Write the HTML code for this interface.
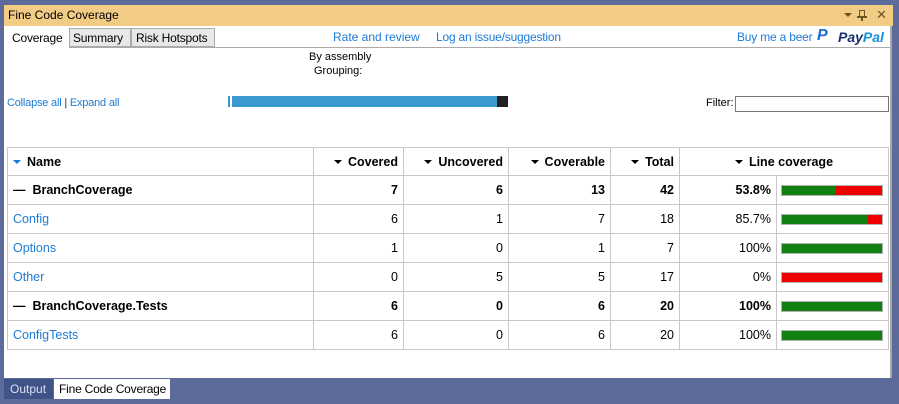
<!DOCTYPE html><html><head><style>
*{margin:0;padding:0;box-sizing:border-box}
body{width:899px;height:404px;background:#5d6b9a;font-family:"Liberation Sans",sans-serif;font-size:12px;position:relative;overflow:hidden;color:#000}
.a{position:absolute;white-space:nowrap}
.lk{color:#1e7ad6}
table{position:absolute;left:7px;top:147px;border-collapse:collapse;width:882px}
td{border:1px solid #c8c8c8;height:29px;font-size:12.5px;padding:0 5px;text-align:right}
td:first-child{text-align:left}
.h td{font-weight:bold;height:28px}
.b td{font-weight:bold}
.n{color:#1e7ad6}
.bar{display:block;width:102px;height:11px;border:1px solid #b0b0b0;background:#e00;margin-left:-1px}
.bar i{display:block;height:100%;background:#118011}
.tri{display:inline-block;width:0;height:0;border-left:4px solid transparent;border-right:4px solid transparent;border-top:4px solid #000;vertical-align:middle;margin-right:6px}
</style></head><body>
<div class="a" style="left:4px;top:5px;width:889px;height:21px;background:#f2cb85"></div>
<div class="a" style="left:8px;top:8px;font-size:12px">Fine Code Coverage</div>
<div class="a" style="left:844px;top:13px;width:0;height:0;border-left:4px solid transparent;border-right:4px solid transparent;border-top:4px solid #6b5520"></div>
<div class="a" style="left:859px;top:10px;width:6px;height:7px;border:1.5px solid #6b5520"></div>
<div class="a" style="left:857px;top:16px;width:10px;height:1.5px;background:#6b5520"></div>
<div class="a" style="left:861px;top:17px;width:1.5px;height:4px;background:#6b5520"></div>
<div class="a" style="left:876px;top:7px;font-size:13px;color:#6b5520">✕</div>
<div class="a" style="left:4px;top:26px;width:888px;height:352px;background:#fff;border-right:2px solid #a8a8a8"></div>
<div class="a" style="left:69px;top:47px;width:822px;height:1px;background:#aaa"></div>
<div class="a" style="left:69px;top:28px;width:62px;height:19px;background:#e8e8e8;border:1px solid #aaa"></div>
<div class="a" style="left:73px;top:31px;font-size:12px;letter-spacing:-0.2px">Summary</div>
<div class="a" style="left:131px;top:28px;width:84px;height:19px;background:#e8e8e8;border:1px solid #aaa"></div>
<div class="a" style="left:136px;top:31px;font-size:12px;letter-spacing:-0.2px">Risk Hotspots</div>
<div class="a" style="left:12px;top:31px;font-size:12px;letter-spacing:-0.2px">Coverage</div>
<div class="a lk" style="left:333px;top:30px;font-size:12px">Rate and review</div>
<div class="a lk" style="left:436px;top:30px;font-size:12px;letter-spacing:-0.2px">Log an issue/suggestion</div>
<div class="a lk" style="left:737px;top:30px;font-size:12px;letter-spacing:-0.2px">Buy me a beer</div>
<div class="a" style="left:817px;top:27px;font-size:16px;font-weight:bold;font-style:italic;color:#1a6fd0">P</div>
<div class="a" style="left:838px;top:29px;font-size:14px;font-weight:bold;font-style:italic;color:#17306e">Pay<span style="color:#1a8fd8">Pal</span></div>
<div class="a" style="left:309px;top:51px;font-size:11px">By assembly</div>
<div class="a" style="left:314px;top:65px;font-size:11px">Grouping:</div>
<div class="a lk" style="left:7px;top:97px;font-size:11px;letter-spacing:-0.2px">Collapse all <span style="color:#333">|</span> Expand all</div>
<div class="a" style="left:228px;top:96px;width:2px;height:11px;background:#3a9ad0"></div>
<div class="a" style="left:232px;top:96px;width:265px;height:11px;background:#3a9ad0"></div>
<div class="a" style="left:497px;top:96px;width:11px;height:11px;background:#222"></div>
<div class="a" style="left:706px;top:97px;font-size:11px">Filter:</div>
<div class="a" style="left:735px;top:96px;width:154px;height:16px;border:1px solid #777"></div>
<table>
<colgroup><col style="width:306px"><col style="width:90px"><col style="width:105px"><col style="width:102px"><col style="width:69px"><col style="width:97px"><col></colgroup>
<tr class="h"><td><span class="tri" style="border-top-color:#1e7ad6"></span>Name</td><td><span class="tri"></span>Covered</td><td><span class="tri"></span>Uncovered</td><td><span class="tri"></span>Coverable</td><td><span class="tri"></span>Total</td><td colspan="2" style="text-align:center"><span class="tri"></span>Line coverage</td></tr>
<tr class="b"><td>&#x2014; &nbsp;BranchCoverage</td><td>7</td><td>6</td><td>13</td><td>42</td><td>53.8%</td><td><span class="bar"><i style="width:53.8%"></i></span></td></tr>
<tr><td class="n">Config</td><td>6</td><td>1</td><td>7</td><td>18</td><td>85.7%</td><td><span class="bar"><i style="width:85.7%"></i></span></td></tr>
<tr><td class="n">Options</td><td>1</td><td>0</td><td>1</td><td>7</td><td>100%</td><td><span class="bar"><i style="width:100%"></i></span></td></tr>
<tr><td class="n">Other</td><td>0</td><td>5</td><td>5</td><td>17</td><td>0%</td><td><span class="bar"><i style="width:0"></i></span></td></tr>
<tr class="b"><td>&#x2014; &nbsp;BranchCoverage.Tests</td><td>6</td><td>0</td><td>6</td><td>20</td><td>100%</td><td><span class="bar"><i style="width:100%"></i></span></td></tr>
<tr><td class="n">ConfigTests</td><td>6</td><td>0</td><td>6</td><td>20</td><td>100%</td><td><span class="bar"><i style="width:100%"></i></span></td></tr>
</table>
<div class="a" style="left:4px;top:379px;width:49px;height:20px;background:#3f5387"></div>
<div class="a" style="left:10px;top:382px;color:#dde;font-size:12px">Output</div>
<div class="a" style="left:54px;top:379px;width:116px;height:20px;background:#fff"></div>
<div class="a" style="left:59px;top:382px;font-size:12px;letter-spacing:-0.2px">Fine Code Coverage</div>
</body></html>
